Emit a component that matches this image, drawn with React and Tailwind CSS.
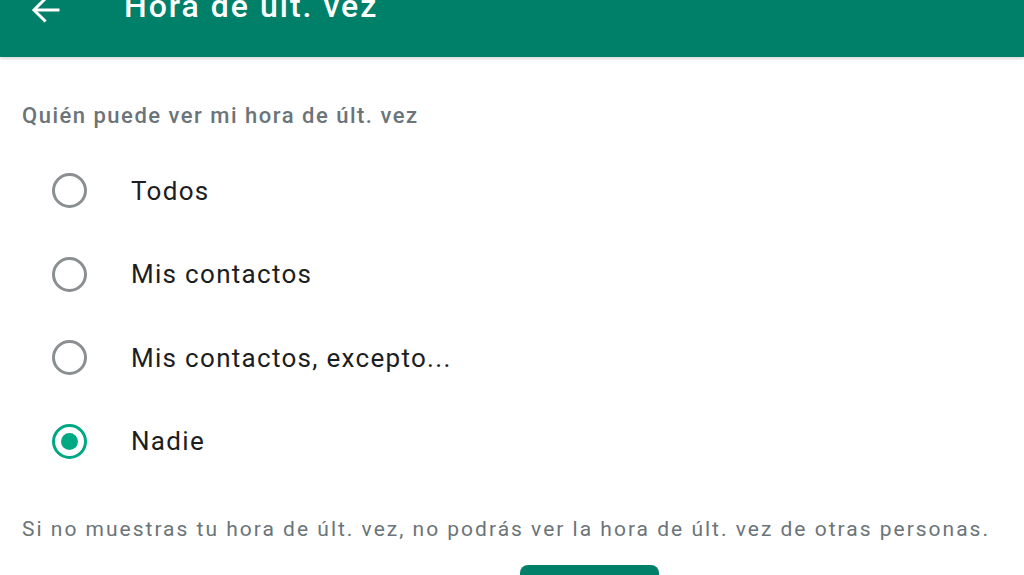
export default function App() {
  const options = ["Todos", "Mis contactos", "Mis contactos, excepto...", "Nadie"];
  const selected = "Nadie";

  return (
    <div className="w-[1024px] h-[575px] overflow-hidden bg-white" style={{ fontFamily: "Roboto, 'Noto Sans', sans-serif" }}>
      {/* Top bar */}
      <header className="h-[57px] bg-[#008069] flex items-start relative shadow-[0_2px_3px_rgba(0,0,0,0.15)]">
        <div className="flex items-center h-[24px] -mt-[2px]">
          <svg width="36" height="36" viewBox="0 0 24 24" className="ml-[28px] text-white" fill="none" stroke="currentColor" strokeWidth="2" strokeLinecap="square">
            <path d="M20 12H5" />
            <path d="M11 5l-7 7 7 7" />
          </svg>
          <h1 className="ml-[60px] text-[32px] font-medium text-white leading-none tracking-[2px] -mt-[8px]">Hora de últ. vez</h1>
        </div>
      </header>

      <main className="pt-[48px]">
        <p className="px-[22px] text-[22px] font-medium text-[#6b7479] leading-none tracking-[1.5px]">Quién puede ver mi hora de últ. vez</p>

        <ul className="mt-[22px] flex flex-col">
          {options.map((o) => (
            <li key={o} className="h-[83.5px] flex items-center">
              <span className={`ml-[52px] w-[35px] h-[35px] rounded-full border-[3px] flex items-center justify-center ${o === selected ? "border-[#00a884]" : "border-[#8a8f92]"}`}>
                {o === selected && <span className="w-[17px] h-[17px] rounded-full bg-[#00a884]" />}
              </span>
              <span className="ml-[44px] text-[26px] text-[#1c1e21] leading-none tracking-[1.3px]">{o}</span>
            </li>
          ))}
        </ul>

        <p className="mt-[36px] px-[22px] text-[21px] text-[#6b7479] leading-none tracking-[2px] whitespace-nowrap">
          Si no muestras tu hora de últ. vez, no podrás ver la hora de últ. vez de otras personas.
        </p>

        <div className="mt-[25px] flex">
          <button className="ml-[520px] w-[139px] h-[44px] bg-[#008069] rounded-[8px]" />
        </div>
      </main>
    </div>
  );
}
